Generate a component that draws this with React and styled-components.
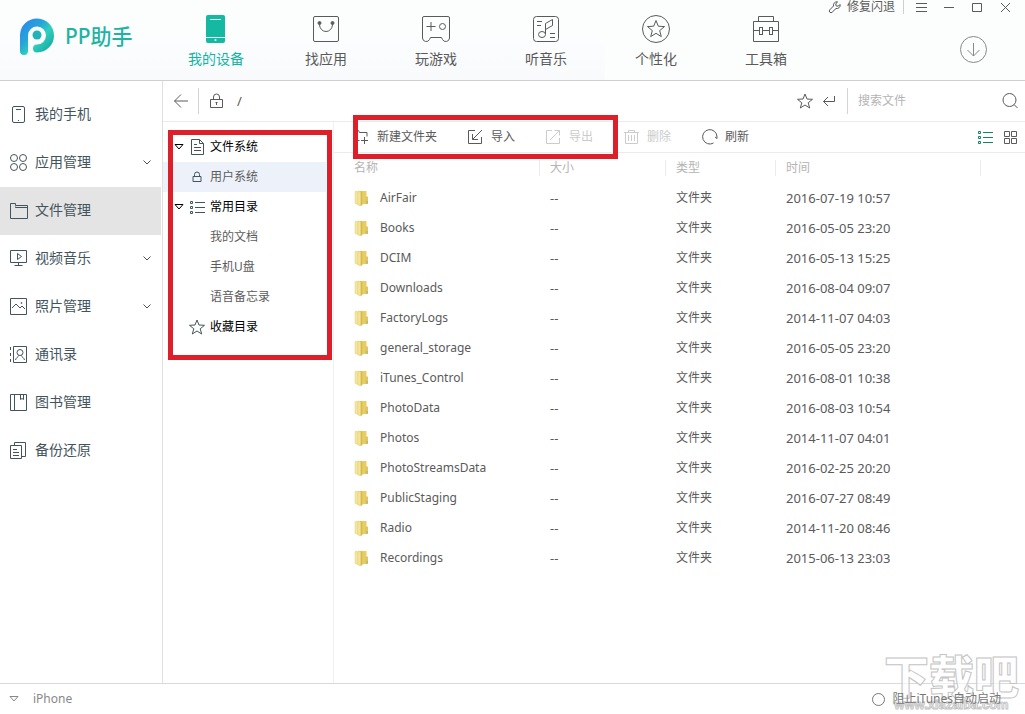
import React from "react";
import styled, { createGlobalStyle } from "styled-components";

const c = {
  teal: "#12b5a2",
  text: "#5a5a5a",
  ink: "#43545c",
  pale: "#b4b4b4",
  line: "#ebebeb",
  rule: "#cfcfcf",
  red: "#dc1f28",
};

const Global = createGlobalStyle`
  *, *::before, *::after { box-sizing: border-box; }
  body {
    margin: 0;
    background: #fff;
    color: ${c.text};
    font: 12px/20px "Noto Sans", "Noto Sans CJK SC", sans-serif;
  }
  button, input { font: inherit; color: inherit; }
  button { padding: 0; border: 0; background: none; cursor: pointer; }
  a { color: inherit; text-decoration: none; }
`;

const Svg = styled.svg.attrs({ "aria-hidden": true })`
  display: block;
  flex: none;
  fill: none;
  stroke: currentColor;
  stroke-width: 1;
  overflow: visible;
`;

const Page = styled.div`
  display: flex;
  flex-direction: column;
  min-height: 100vh;
`;

/* ---------- header ---------- */

const Header = styled.header`
  display: flex;
  height: 81px;
  border-bottom: 1px solid ${c.rule};
  background:
    linear-gradient(#fcfdfe, #f8fafc) left bottom / 59% 44px no-repeat,
    #fcfdfd;
`;

const Brand = styled.a`
  display: flex;
  align-items: center;
  gap: 10px;
  width: 161px;
  padding: 0 0 8px 20px;
  color: #1fb3a3;
  font-size: 21px;
  line-height: 28px;
  font-weight: 500;
`;

const MainNav = styled.nav`
  display: flex;
  flex: 1;
`;

const NavItem = styled.a`
  display: flex;
  flex-direction: column;
  align-items: center;
  gap: 5px;
  width: 110px;
  padding-top: 15px;
  color: ${(p) => (p.$active ? c.teal : c.text)};
  font-size: 14px;
  line-height: 24px;
`;

const HeaderSide = styled.div`
  display: flex;
  flex-direction: column;
  align-items: flex-end;
`;

const WindowBar = styled.div`
  display: flex;
  align-items: center;
  height: 14px;
`;

const RepairButton = styled.button`
  display: flex;
  align-items: center;
  gap: 6px;
  padding-right: 8px;
`;

const WindowButton = styled.button`
  display: grid;
  place-items: center;
  width: 28px;
  height: 14px;
`;

const WindowButtons = styled.div`
  display: flex;
  padding: 0 6px 0 3px;
  border-left: 1px solid ${c.rule};
`;

const DownloadButton = styled.button`
  margin: 22px 38px 0 0;
  color: #888;
`;

/* ---------- sidebar ---------- */

const Body = styled.div`
  display: flex;
  flex: 1;
`;

const Sidebar = styled.nav`
  flex: none;
  width: 163px;
  padding: 10px 1px 0 0;
  border-right: 1px solid #e0e0e0;
`;

const SideItem = styled.a`
  display: flex;
  align-items: center;
  gap: 7px;
  height: 48px;
  padding: 0 10px 2px;
  background: ${(p) => (p.$active ? "#e4e4e4" : "transparent")};
  color: ${c.ink};
  font-size: 14px;
`;

const SideLabel = styled.span`
  flex: 1;
`;

/* ---------- path bar ---------- */

const Main = styled.main`
  display: flex;
  flex-direction: column;
  flex: 1;
  min-width: 0;
`;

const PathBar = styled.div`
  display: flex;
  align-items: center;
  height: 41px;
  padding: 0 7px 0 11px;
  border-bottom: 1px solid ${c.line};
`;

const Divider = styled.span`
  width: 1px;
  height: 26px;
  margin: 0 10px;
  background: #d4d4d4;
`;

const PathInput = styled.input`
  flex: 1;
  min-width: 0;
  margin-left: 14px;
  padding: 0;
  border: 0;
  outline: 0;
  background: none;
  font-size: 13px;
`;

const PathActions = styled.div`
  display: flex;
  align-items: center;
  gap: 10px;
  padding-right: 2px;
`;

const SearchInput = styled.input`
  width: 144px;
  padding: 0;
  border: 0;
  outline: 0;
  background: none;
  &::placeholder { color: ${c.pale}; opacity: 1; }
`;

/* ---------- directory tree ---------- */

const Workspace = styled.div`
  display: flex;
  flex: 1;
`;

const Tree = styled.nav`
  position: relative;
  flex: none;
  width: 171px;
  padding: 10px 7px 0 0;
  border-right: 1px solid #f0f0f0;
`;

const TreeRow = styled.a`
  display: grid;
  grid-template-columns: 10px 16px 1fr;
  align-items: center;
  justify-items: center;
  column-gap: 5px;
  height: 30px;
  padding-left: 11px;
  background: ${(p) => (p.$active ? "#edf1fa" : "transparent")};
  color: ${(p) => (p.$group ? "#000" : "#5c5c5c")};
`;

const TreeLabel = styled.span`
  grid-column: 3;
  justify-self: start;
`;

const TreeMark = styled.span`
  grid-column: 2;
  color: ${c.ink};
`;

const Highlight = styled.span`
  position: absolute;
  z-index: 2;
  border: 5px solid ${c.red};
  pointer-events: none;
`;

const TreeHighlight = styled(Highlight)`
  top: 8px;
  left: 5px;
  width: 164px;
  height: 230px;
`;

const ToolHighlight = styled(Highlight)`
  top: -7px;
  left: 19px;
  width: 265px;
  height: 44px;
`;

/* ---------- file pane ---------- */

const Files = styled.section`
  flex: 1;
  min-width: 0;
`;

const Toolbar = styled.div`
  position: relative;
  display: flex;
  align-items: center;
  gap: 31px;
  height: 31px;
  padding: 0 7px 0 20px;
  border-bottom: 1px solid ${c.line};
`;

const Tool = styled.button`
  display: flex;
  align-items: center;
  gap: 8px;
  color: ${c.text};
  &:disabled { color: #ccc; cursor: default; }
`;

const ViewSwitch = styled.div`
  display: flex;
  gap: 11px;
  margin-left: auto;
`;

const ViewButton = styled.button`
  color: ${(p) => (p.$active ? "#14806f" : c.text)};
`;

const Table = styled.table`
  width: 100%;
  table-layout: fixed;
  border-collapse: collapse;
  text-align: left;
`;

const Col = styled.col`
  width: ${(p) => p.$w};
`;

const Th = styled.th`
  height: 30px;
  padding: 0 0 0 ${(p) => (p.$first ? "20px" : "10px")};
  background: linear-gradient(#ebebeb, #ebebeb) right center / 1px 16px no-repeat;
  color: ${c.pale};
  font-weight: 400;
`;

const Td = styled.td`
  height: 30px;
  padding: 0 0 0 10px;
  font-size: ${(p) => (p.$digits ? "13px" : "12px")};
`;

const FileName = styled.div`
  display: flex;
  align-items: center;
  gap: 10px;
  padding-left: 10px;
`;

/* ---------- footer ---------- */

const Footer = styled.footer`
  position: relative;
  display: flex;
  align-items: center;
  justify-content: space-between;
  height: 31px;
  padding: 0 24px 0 9px;
  border-top: 1px solid #d9d9d9;
`;

const Device = styled.button`
  display: flex;
  align-items: center;
  gap: 14px;
  color: #888;
`;

const BlockOption = styled.label`
  position: relative;
  z-index: 1;
  display: flex;
  align-items: center;
  gap: 7px;
  color: #777;
`;

const RoundCheck = styled.input`
  appearance: none;
  width: 13px;
  height: 13px;
  margin: 0;
  border: 1px solid #777;
  border-radius: 50%;
`;

const Watermark = styled.div`
  position: absolute;
  right: 6px;
  bottom: 3px;
  display: flex;
  flex-direction: column;
  align-items: center;
  color: rgba(255, 255, 255, 0.6);
  font-family: "Noto Sans CJK SC", sans-serif;
  font-weight: 900;
  pointer-events: none;
  -webkit-text-stroke: 1px #c4c4c4;
`;

const WatermarkName = styled.span`
  font-size: 45px;
  line-height: 48px;
`;

const WatermarkSite = styled.span`
  font: 700 13px/12px "Liberation Sans", sans-serif;
`;

/* ---------- drawings ---------- */

const Logo = () => (
  <Svg width="35" height="37" viewBox="0 0 35 37">
    <defs>
      <linearGradient id="ring" x1="0" y1="0" x2="1" y2="1">
        <stop offset="0" stopColor="#2c8cea" />
        <stop offset="0.35" stopColor="#25a6d8" />
        <stop offset="0.6" stopColor="#2fd0bd" />
        <stop offset="1" stopColor="#16a9a4" />
      </linearGradient>
    </defs>
    <path
      d="M4 33V17A13 13 0 1 1 17 30.500"
      stroke="url(#ring)"
      strokeWidth="8"
      strokeLinecap="round"
      fill="none"
    />
    <circle cx="17" cy="17" r="4.500" fill="#20b3ba" stroke="none" />
  </Svg>
);

const navIcons = {
  device: (
    <g stroke="none">
      <rect x="3" y="0" width="19" height="28" rx="2" fill="#14b8a3" />
      <path d="M7 4.500h11M3 22.500h19" stroke="#e6faf6" />
      <circle cx="12.500" cy="25" r="1" fill="#fff" />
    </g>
  ),
  apps: (
    <g>
      <rect x="0.500" y="1.500" width="25" height="25" rx="1.500" />
      <path d="M6.500 8v1.500a6.500 7 0 0 0 13 0V8" />
      <circle cx="6.500" cy="8" r="1.500" fill="currentColor" />
      <circle cx="19.500" cy="8" r="1.500" fill="currentColor" />
    </g>
  ),
  games: (
    <g>
      <path d="M1 1.500h24a1.500 1.500 0 0 1 1.500 1.500V23a3.700 3.700 0 0 1-7 1.500L18.500 22.500h-11L6.500 24.500A3.700 3.700 0 0 1-.5 23V3A1.500 1.500 0 0 1 1 1.500z" />
      <path d="M3.500 11.500h9M8 7v9" />
      <circle cx="19.500" cy="11.500" r="3" />
    </g>
  ),
  music: (
    <g>
      <rect x="0.500" y="1.500" width="25" height="25" rx="3" />
      <path d="M4 6.500h5M4 10.500h4M17 18.500h5M17 22.500h5M12.500 19V8.500l7-4v6l-7 4" />
      <ellipse cx="9" cy="19.500" rx="3.500" ry="3" />
    </g>
  ),
  star: (
    <g>
      <circle cx="13" cy="14" r="13.500" />
      <path d="M13 5.500l2.300 5.700 6.200.4-4.800 4 1.600 6L13 18.300l-5.300 3.300 1.600-6-4.800-4 6.200-.4z" />
    </g>
  ),
  tools: (
    <g>
      <path d="M.5 6.500h25v20H.5zM5.500 6.500v-5h15v5M.5 15.500h6M9.500 15.500h7M19.500 15.500h6" />
      <rect x="6.500" y="12.500" width="3" height="7" />
      <rect x="16.500" y="12.500" width="3" height="7" />
    </g>
  ),
};

const sideIcons = {
  phone: (
    <g>
      <rect x="2.500" y="0.500" width="12" height="16" rx="1.500" />
      <path d="M6 3.500h5M8 14.500h1" />
    </g>
  ),
  circles: (
    <g>
      <circle cx="4" cy="4" r="3.500" />
      <circle cx="13" cy="4" r="3.500" />
      <circle cx="4" cy="13" r="3.500" />
      <circle cx="13" cy="13" r="3.500" />
    </g>
  ),
  folder: <path d="M.5 16.500V1.500h5v2h12v13zM5.500 4.500v1h12" />,
  video: (
    <g>
      <path d="M.5.500h16v12H.5zM8.500 12.500v3M4.500 15.500h8M7.500 3.500v6l4-3z" />
    </g>
  ),
  photo: (
    <g>
      <path d="M.5.500h16v16H.5zM2 10l4-4 4 4 2-2 3 3" />
      <circle cx="11.500" cy="5" r="0.500" />
    </g>
  ),
  contact: (
    <g>
      <path d="M3.500.500h13v16h-13zM.5 1v3M.5 7v3M.5 13v3M5.500 14c.5-2.500 3-3 3-4.500M14.500 14c-.5-2.500-3-3-3-4.500" />
      <circle cx="10" cy="6.500" r="3" />
    </g>
  ),
  book: <path d="M.5.500h16v16H.5zM4.500.500v16M10.500.500v5l1.500-1 1.500 1v-5" />,
  backup: (
    <g>
      <path d="M4.500 3.500v-3h11v14h-4M.5 3.500h11v13H.5zM3 7.500h4M3 10.500h6M3 13.500h6" />
    </g>
  ),
};

const Chevron = () => (
  <Svg width="8" height="5" viewBox="0 0 8 5">
    <path d="M.5.500L4 4 7.500.500" />
  </Svg>
);

const Triangle = () => (
  <Svg width="10" height="6" viewBox="0 0 10 6">
    <path d="M1 .5h8l-4 4.500z" />
  </Svg>
);

const Star = () => (
  <Svg width="16" height="16" viewBox="0 0 16 16">
    <path d="M8 1l2 5 5.500.3-4.300 3.500 1.500 5.200L8 12l-4.700 3 1.500-5.200L.5 6.300 6 6z" />
  </Svg>
);

const Lock = () => (
  <Svg width="14" height="14" viewBox="0 0 14 14">
    <path d="M1.500 5.500h12v8h-12zM4.500 5.500V3a3 3 0 0 1 6 0v2.500M7.500 8v3M6.500 8.500h2" />
  </Svg>
);

const SmallLock = () => (
  <Svg width="8" height="10" viewBox="0 0 8 10">
    <path d="M0 4.500h8v5H0zM1.500 4.500V2.500a2.500 2.500 0 0 1 5 0v2" />
  </Svg>
);

const Doc = () => (
  <Svg width="13" height="16" viewBox="0 0 13 16">
    <path d="M.5.500h8l4 4v11H.5zM8.500.500v4h4M3 5.500h3M3 8.500h7M3 11.500h7" />
  </Svg>
);

const ListIcon = () => (
  <Svg width="15" height="13" viewBox="0 0 15 13">
    <path d="M.5.500h2v2h-2zM.5 5.500h2v2h-2zM.5 10.500h2v2h-2zM5 1.500h10M5 6.500h10M5 11.500h10" />
  </Svg>
);

const GridIcon = () => (
  <Svg width="14" height="13" viewBox="0 0 14 13">
    <path d="M.5.500h5v5h-5zM7.500.500h5v5h-5zM.5 7.500h5v5h-5zM7.500 7.500h5v5h-5z" />
  </Svg>
);

const FolderIcon = () => (
  <Svg width="16" height="16" viewBox="0 0 16 16">
    <defs>
      <linearGradient id="leaf" x1="0" x2="1">
        <stop offset="0" stopColor="#fbf4bd" />
        <stop offset="0.5" stopColor="#f0e08a" />
        <stop offset="1" stopColor="#d3ae3c" />
      </linearGradient>
    </defs>
    <g stroke="none">
      <path d="M6 1h6.500v12.500L6 15z" fill="#e8cd60" />
      <path d="M11 6.500h3v7.500h-3z" fill="#dfc767" />
      <path d="M12.500 11h1v2.500h-1z" fill="#8fb09a" />
    </g>
    <path d="M1 1.500L5 1v13.500l-4-1z" fill="#f3e7a0" stroke="#e0cb78" strokeWidth="0.500" />
    <path d="M4 2.500c0-1 4-1.500 4-.5v13c0 .8-4 .6-4-.5z" fill="url(#leaf)" stroke="#d3b758" strokeWidth="0.500" />
  </Svg>
);

const toolIcons = {
  create: <path d="M.5 11.500V1.500h4l1 2h7.500v4M.5 11.500h5M7 11.500h7M10.500 8v7" />,
  import: <path d="M7 1.500H.5v13h13V8M14 1L4.500 10.500M4.500 5v5.500H10" />,
  export: <path d="M6 1.500H.5v13h13V9M4 11L13.500 1.500M8.500 1.500h5v5" />,
  remove: <path d="M0 3.500h15M4.500 3.500v-2h6v2M1.500 3.500v11h12v-11M4.500 6v6M7.500 6v6M10.500 6v6" />,
  refresh: <path d="M11.500 14A7.200 7.200 0 1 1 15 8v1.500M13 8l2 1.500" />,
};

/* ---------- data ---------- */

const nav = [
  ["device", "我的设备"],
  ["apps", "找应用"],
  ["games", "玩游戏"],
  ["music", "听音乐"],
  ["star", "个性化"],
  ["tools", "工具箱"],
];

const side = [
  ["phone", "我的手机", false],
  ["circles", "应用管理", true],
  ["folder", "文件管理", false],
  ["video", "视频音乐", true],
  ["photo", "照片管理", true],
  ["contact", "通讯录", false],
  ["book", "图书管理", false],
  ["backup", "备份还原", false],
];

const tree = [
  { label: "文件系统", group: true, open: true, icon: <Doc /> },
  { label: "用户系统", active: true, icon: <SmallLock /> },
  { label: "常用目录", group: true, open: true, icon: <ListIcon /> },
  { label: "我的文档" },
  { label: "手机U盘" },
  { label: "语音备忘录" },
  { label: "收藏目录", group: true, icon: <Star /> },
];

const tools = [
  ["create", "新建文件夹", false],
  ["import", "导入", false],
  ["export", "导出", true],
  ["remove", "删除", true],
  ["refresh", "刷新", false],
];

const files = [
  ["AirFair", "2016-07-19 10:57"],
  ["Books", "2016-05-05 23:20"],
  ["DCIM", "2016-05-13 15:25"],
  ["Downloads", "2016-08-04 09:07"],
  ["FactoryLogs", "2014-11-07 04:03"],
  ["general_storage", "2016-05-05 23:20"],
  ["iTunes_Control", "2016-08-01 10:38"],
  ["PhotoData", "2016-08-03 10:54"],
  ["Photos", "2014-11-07 04:01"],
  ["PhotoStreamsData", "2016-02-25 20:20"],
  ["PublicStaging", "2016-07-27 08:49"],
  ["Radio", "2014-11-20 08:46"],
  ["Recordings", "2015-06-13 23:03"],
];

export default function App() {
  return (
    <Page>
      <Global />
      <Header>
        <Brand href="#">
          <Logo />
          PP助手
        </Brand>
        <MainNav>
          {nav.map(([id, label], i) => (
            <NavItem key={id} href="#" $active={i === 0}>
              <Svg width="26" height="27" viewBox="0 0 26 27">{navIcons[id]}</Svg>
              {label}
            </NavItem>
          ))}
        </MainNav>
        <HeaderSide>
          <WindowBar>
            <RepairButton>
              <Svg width="12" height="12" viewBox="0 0 12 12">
                <path d="M8.500.800A3.500 3.500 0 0 0 4.500 5L.8 8.800a1.600 1.600 0 0 0 2.400 2.400L7 7.500A3.500 3.500 0 0 0 11.200 3.500L9 5.200 7 4.800 6.800 3z" />
              </Svg>
              修复闪退
            </RepairButton>
            <WindowButtons>
              <WindowButton aria-label="菜单">
                <Svg width="11" height="9" viewBox="0 0 11 9"><path d="M0 .5h11M0 4.500h11M0 8.500h11" /></Svg>
              </WindowButton>
              <WindowButton aria-label="最小化">
                <Svg width="10" height="1" viewBox="0 0 10 1"><path d="M0 .5h10" /></Svg>
              </WindowButton>
              <WindowButton aria-label="最大化">
                <Svg width="10" height="9" viewBox="0 0 10 9"><path d="M.5.500h9v8h-9z" /></Svg>
              </WindowButton>
              <WindowButton aria-label="关闭">
                <Svg width="9" height="9" viewBox="0 0 9 9"><path d="M0 0l9 9M9 0L0 9" /></Svg>
              </WindowButton>
            </WindowButtons>
          </WindowBar>
          <DownloadButton aria-label="下载">
            <Svg width="27" height="27" viewBox="0 0 27 27">
              <circle cx="13.500" cy="13.500" r="13" />
              <path d="M13.500 7v13M7.500 14l6 6 6-6" />
            </Svg>
          </DownloadButton>
        </HeaderSide>
      </Header>

      <Body>
        <Sidebar>
          {side.map(([id, label, more]) => (
            <SideItem key={id} href="#" $active={id === "folder"}>
              <Svg width="18" height="17" viewBox="0 0 18 17">{sideIcons[id]}</Svg>
              <SideLabel>{label}</SideLabel>
              {more && <Chevron />}
            </SideItem>
          ))}
        </Sidebar>

        <Main>
          <PathBar>
            <button aria-label="返回">
              <Svg width="14" height="14" viewBox="0 0 14 14"><path d="M14 7H.5M7 .5L.5 7 7 13.500" /></Svg>
            </button>
            <Divider />
            <Lock />
            <PathInput aria-label="路径" defaultValue="/" />
            <PathActions>
              <button aria-label="收藏"><Star /></button>
              <button aria-label="转到">
                <Svg width="12" height="10" viewBox="0 0 12 10"><path d="M11.500 0v5.500H.5M5 1L.5 5.500 5 10" /></Svg>
              </button>
            </PathActions>
            <Divider />
            <SearchInput type="search" aria-label="搜索文件" placeholder="搜索文件" />
            <button aria-label="搜索">
              <Svg width="16" height="16" viewBox="0 0 16 16">
                <circle cx="7.500" cy="7" r="6.500" />
                <path d="M12 11.500l3.500 3.500" />
              </Svg>
            </button>
          </PathBar>

          <Workspace>
            <Tree>
              {tree.map((t) => (
                <TreeRow key={t.label} href="#" $active={t.active} $group={t.group}>
                  {t.open && <Triangle />}
                  {t.icon && <TreeMark>{t.icon}</TreeMark>}
                  <TreeLabel>{t.label}</TreeLabel>
                </TreeRow>
              ))}
              <TreeHighlight />
            </Tree>

            <Files>
              <Toolbar>
                {tools.map(([id, label, off]) => (
                  <Tool key={id} disabled={off}>
                    <Svg width="15" height="16" viewBox="0 0 15 16">{toolIcons[id]}</Svg>
                    {label}
                  </Tool>
                ))}
                <ViewSwitch>
                  <ViewButton $active aria-label="列表"><ListIcon /></ViewButton>
                  <ViewButton aria-label="图标"><GridIcon /></ViewButton>
                </ViewSwitch>
                <ToolHighlight />
              </Toolbar>
              <Table>
                <colgroup>
                  <Col $w="206px" />
                  <Col $w="126px" />
                  <Col $w="110px" />
                  <Col $w="205px" />
                  <Col $w="auto" />
                </colgroup>
                <thead>
                  <tr>
                    <Th $first>名称</Th>
                    <Th>大小</Th>
                    <Th>类型</Th>
                    <Th>时间</Th>
                    <td />
                  </tr>
                </thead>
                <tbody>
                  {files.map(([name, time]) => (
                    <tr key={name}>
                      <Td>
                        <FileName><FolderIcon />{name}</FileName>
                      </Td>
                      <Td $digits>--</Td>
                      <Td>文件夹</Td>
                      <Td $digits>{time}</Td>
                      <td />
                    </tr>
                  ))}
                </tbody>
              </Table>
            </Files>
          </Workspace>
        </Main>
      </Body>

      <Footer>
        <Device><Triangle />iPhone</Device>
        <BlockOption>
          <RoundCheck type="checkbox" />
          阻止iTunes自动启动
        </BlockOption>
        <Watermark aria-hidden="true">
          <WatermarkName>下载吧</WatermarkName>
          <WatermarkSite>www.xiazaiba.com</WatermarkSite>
        </Watermark>
      </Footer>
    </Page>
  );
}
